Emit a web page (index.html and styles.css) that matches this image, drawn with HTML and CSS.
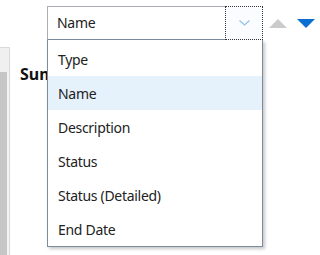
FILE: index.html
```html
<!DOCTYPE html>
<html lang="en">
<head>
    <meta charset="UTF-8">
    <title>Sort</title>
    <link rel="stylesheet" href="styles.css">
</head>
<body>
    <div class="page">
        <div class="toolbar">
            <div class="combo">
                <span class="combo-value">Name</span>
                <span class="combo-btn">
                    <svg width="11" height="6" viewBox="0 0 11 6"><path d="M0.5 0.5 L5.5 5 L10.5 0.5" fill="none" stroke="#8fc0ef" stroke-width="1.2"/></svg>
                </span>
            </div>
            <span class="sort-up"></span>
            <span class="sort-down"></span>
        </div>

        <div class="main">
            <div class="side-scroll">
                <div class="side-arrow"></div>
                <div class="side-thumb"></div>
            </div>
            <h2 class="title">Summary</h2>
        </div>

        <ul class="menu">
            <li>Type</li>
            <li class="selected">Name</li>
            <li>Description</li>
            <li>Status</li>
            <li>Status (Detailed)</li>
            <li>End Date</li>
        </ul>
    </div>
</body>
</html>
```
FILE: styles.css
```css
body {
    margin: 0;
    background: #fff;
    font-family: "Noto Sans", "Open Sans", sans-serif;
    font-size: 14px;
    letter-spacing: -0.3px;
    color: #222;
}
.page {
    position: relative;
    width: 320px;
    height: 255px;
    overflow: hidden;
}
.toolbar {
    display: flex;
    align-items: center;
    padding: 6px 0 0 47px;
    height: 34px;
}
.combo {
    display: flex;
    width: 216px;
    height: 34px;
    box-sizing: border-box;
    border: 1px solid #abadb3;
    border-bottom-color: #7b8c9c;
    background: #fff;
}
.combo-value {
    flex: 1;
    padding-left: 9px;
    line-height: 31px;
}
.combo-btn {
    width: 36px;
    display: flex;
    align-items: center;
    justify-content: center;
    border: 1px dotted #333;
    margin: -1px -1px -1px 0;
    background: #fafcff;
}
.sort-up {
    width: 0;
    height: 0;
    margin-left: 6px;
    border-left: 9px solid transparent;
    border-right: 9px solid transparent;
    border-bottom: 9px solid #cbcbcb;
}
.sort-down {
    width: 0;
    height: 0;
    margin-left: 10px;
    border-left: 9px solid transparent;
    border-right: 9px solid transparent;
    border-top: 9px solid #0b6fd1;
}
.main {
    display: flex;
    padding-top: 7px;
}
.side-scroll {
    width: 9px;
    height: 208px;
    border: 1px solid #d9d9d9;
    border-left: none;
    background: #f0f0f0;
    display: flex;
    flex-direction: column;
}
.side-arrow {
    height: 24px;
}
.side-thumb {
    flex: 1;
    background: #c6c6c6;
    border-right: 2px solid #f4f4f4;
}
/* only the part left of the open list shows */
.title {
    margin: 16px 0 0 10px;
    width: 27px;
    overflow: hidden;
    white-space: nowrap;
    font-size: 16px;
    font-weight: bold;
    letter-spacing: 0;
    color: #111;
}
.menu {
    position: absolute;
    left: 47px;
    top: 40px;
    width: 216px;
    height: 207px;
    box-sizing: border-box;
    margin: 0;
    padding: 2px 0 0;
    list-style: none;
    overflow: hidden;
    background: #fff;
    border: 1px solid #7b8c9c;
    border-top: none;
    box-shadow: 2px 2px 3px rgba(0, 0, 0, 0.22);
}
.menu li {
    height: 34px;
    line-height: 35px;
    padding-left: 10px;
}
.menu li.selected {
    background: #e5f1fb;
}
```
